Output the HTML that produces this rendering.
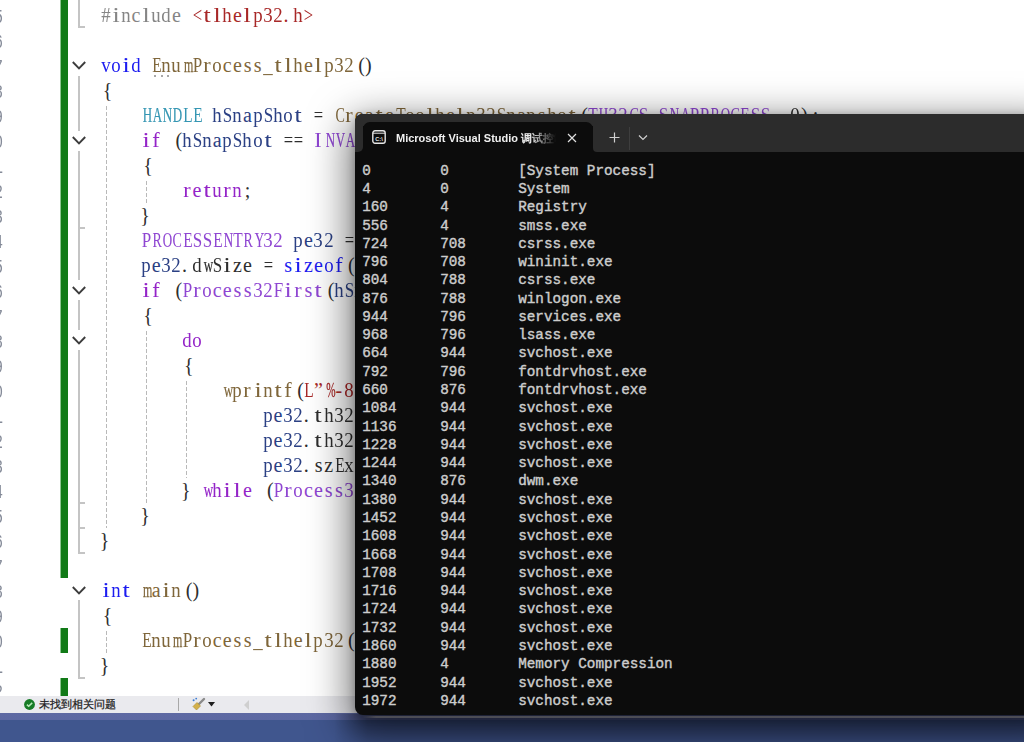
<!DOCTYPE html>
<html><head><meta charset="utf-8">
<style>
*{margin:0;padding:0;box-sizing:border-box}
html,body{width:1024px;height:742px;overflow:hidden;background:#fff;position:relative}
.ed{position:absolute;left:0;top:0;width:1024px;height:696px;background:#fff;overflow:hidden}
.ln{position:absolute;left:-37px;width:41px;text-align:right;height:25px;white-space:pre;font:15px/25px "Liberation Mono",monospace;letter-spacing:1px;color:#858b99;transform:scaleY(1.355);transform-origin:0 0}
.cl{position:absolute;left:100.5px;height:25px;white-space:pre;font:20px/25px "Liberation Serif",serif;color:#1e1e1e}
.cl b{display:inline-block;width:10.15px;text-align:center;font-weight:normal}
.cl b.s94{transform:scaleX(0.94)}.cl b.s130{transform:scaleX(1.3)}.cl b.s83{transform:scaleX(0.83)}.cl b.s77{transform:scaleX(0.77)}.cl b.s60{transform:scaleX(0.6);-webkit-text-stroke:0.25px currentColor}.cl b.s85{transform:scaleX(0.85)}.cl b.s111{transform:scaleX(1.11)}.cl b.s65{transform:scaleX(0.65);-webkit-text-stroke:0.2px currentColor}.cl b.s70{transform:scaleX(0.7)}.cl b.s56{transform:scaleX(0.56);-webkit-text-stroke:0.29px currentColor}
.gb{position:absolute;left:61px;width:7px;background:#117a17;box-shadow:-1px 0 0 #8cc48f}
.vl{position:absolute;left:78px;width:2px;background:#c4c4c4}
.tk{position:absolute;left:78px;width:7px;height:2px;background:#c4c4c4}
.chev{position:absolute;left:72px;width:14px;height:10px}
.ig{position:absolute;width:1px;background:repeating-linear-gradient(to bottom,#b9b9b9 0 4px,transparent 4px 6px)}
.k{color:#1c1cf0}.c{color:#9424c8}.f{color:#7f663a}.t{color:#3596b3}.v{color:#2b4084}.m{color:#8f46d2}.s{color:#a82828}.p{color:#858585}.b{color:#2e2e2e}
.status{position:absolute;left:0;top:696px;width:1024px;height:17px;background:#eaeaee}
.blue{position:absolute;left:0;top:713px;width:1024px;height:30px;background:linear-gradient(to bottom,#5e69a3 0,#5c68a2 6.5px,#40568e 7.5px,#40568e 100%)}
.con{position:absolute;left:354.5px;top:114px;width:700px;height:601px;background:#0c0c0c;border-radius:8px;box-shadow:0 12px 40px 6px rgba(0,0,0,0.55),0 2px 8px 0 rgba(0,0,0,0.25);overflow:hidden}
.tbar{position:absolute;left:0;top:0;width:100%;height:12px;background:#2c2c2c}
.tab{position:absolute;left:8px;top:7.5px;width:230px;height:31px;background:#0c0c0c;border-radius:7px 7px 0 0}
.ttl{position:absolute;left:41.5px;top:17px;font:bold 11px/14px "Liberation Sans",sans-serif;color:#f0f0f0;white-space:nowrap;width:160px;overflow:hidden;-webkit-mask-image:linear-gradient(to right,#000 134px,transparent 160px);mask-image:linear-gradient(to right,#000 134px,transparent 160px)}
.cline{position:absolute;font:14.3px/18.28px "Liberation Mono",monospace;color:#cccccc;white-space:pre;-webkit-text-stroke:0.4px #cccccc}
</style></head><body>
<div class="ed" id="ed">
<div class="ln" style="top:1px">5</div>
<div class="ln" style="top:26px">6</div>
<div class="ln" style="top:51px">7</div>
<div class="ln" style="top:76px">8</div>
<div class="ln" style="top:101px">9</div>
<div class="ln" style="top:126px">10</div>
<div class="ln" style="top:151px">11</div>
<div class="ln" style="top:176px">12</div>
<div class="ln" style="top:201px">13</div>
<div class="ln" style="top:226px">14</div>
<div class="ln" style="top:251px">15</div>
<div class="ln" style="top:276px">16</div>
<div class="ln" style="top:301px">17</div>
<div class="ln" style="top:326px">18</div>
<div class="ln" style="top:351px">19</div>
<div class="ln" style="top:376px">20</div>
<div class="ln" style="top:401px">21</div>
<div class="ln" style="top:426px">22</div>
<div class="ln" style="top:451px">23</div>
<div class="ln" style="top:476px">24</div>
<div class="ln" style="top:501px">25</div>
<div class="ln" style="top:526px">26</div>
<div class="ln" style="top:551px">27</div>
<div class="ln" style="top:576px">28</div>
<div class="ln" style="top:601px">29</div>
<div class="ln" style="top:626px">30</div>
<div class="ln" style="top:651px">31</div>
<div class="ln" style="top:676px">32</div>
<div class="gb" style="top:0;height:578px"></div>
<div class="gb" style="top:628px;height:25px"></div>
<div class="gb" style="top:678px;height:18px"></div>
<div class="vl" style="top:0px;height:27px"></div>
<div class="tk" style="top:26px"></div>
<div class="vl" style="top:76px;height:55px"></div>
<div class="vl" style="top:151px;height:129px"></div>
<div class="tk" style="top:227px"></div>
<div class="vl" style="top:300px;height:30px"></div>
<div class="vl" style="top:350px;height:203px"></div>
<div class="tk" style="top:502px"></div>
<div class="tk" style="top:527px"></div>
<div class="tk" style="top:552px"></div>
<div class="vl" style="top:600px;height:78px"></div>
<div class="tk" style="top:677px"></div>
<svg class="chev" style="top:60px" viewBox="0 0 14 10"><path d="M0.8 2 L7 8.3 L13.2 2" fill="none" stroke="#3c3c3c" stroke-width="1.9"/></svg>
<svg class="chev" style="top:135px" viewBox="0 0 14 10"><path d="M0.8 2 L7 8.3 L13.2 2" fill="none" stroke="#3c3c3c" stroke-width="1.9"/></svg>
<svg class="chev" style="top:285px" viewBox="0 0 14 10"><path d="M0.8 2 L7 8.3 L13.2 2" fill="none" stroke="#3c3c3c" stroke-width="1.9"/></svg>
<svg class="chev" style="top:335px" viewBox="0 0 14 10"><path d="M0.8 2 L7 8.3 L13.2 2" fill="none" stroke="#3c3c3c" stroke-width="1.9"/></svg>
<svg class="chev" style="top:585px" viewBox="0 0 14 10"><path d="M0.8 2 L7 8.3 L13.2 2" fill="none" stroke="#3c3c3c" stroke-width="1.9"/></svg>
<div class="ig" style="left:106px;top:106px;height:422px"></div>
<div class="ig" style="left:146px;top:181px;height:22px"></div>
<div class="ig" style="left:146px;top:331px;height:172px"></div>
<div class="ig" style="left:186px;top:381px;height:97px"></div>
<div class="ig" style="left:106px;top:631px;height:22px"></div>
<div style="position:absolute;left:154px;top:74.5px;width:2.2px;height:2.2px;border-radius:50%;background:#8a8a8a"></div>
<div style="position:absolute;left:160.5px;top:74.5px;width:2.2px;height:2.2px;border-radius:50%;background:#8a8a8a"></div>
<div style="position:absolute;left:166.5px;top:74.5px;width:2.2px;height:2.2px;border-radius:50%;background:#8a8a8a"></div>
<div class="cl" style="top:3.0px"><span class="p"><b class="s94">#</b><b class="s130">i</b><b class="s94">n</b><b>c</b><b class="s130">l</b><b class="s94">u</b><b class="s94">d</b><b>e</b><b> </b></span><span class="s"><b class="s83">&lt;</b><b class="s130">t</b><b class="s130">l</b><b class="s94">h</b><b>e</b><b class="s130">l</b><b class="s94">p</b><b class="s94">3</b><b class="s94">2</b><b style="position:relative;left:-2.2px">.</b><b class="s94">h</b><b class="s83">&gt;</b></span></div>
<div class="cl" style="top:53.0px"><span class="k"><b class="s94">v</b><b class="s94">o</b><b class="s130">i</b><b class="s94">d</b><b> </b></span><span class="f"><b class="s77">E</b><b class="s94">n</b><b class="s94">u</b><b class="s60">m</b><b class="s85">P</b><b class="s111">r</b><b class="s94">o</b><b>c</b><b>e</b><b>s</b><b>s</b><b class="s94">_</b><b class="s130">t</b><b class="s130">l</b><b class="s94">h</b><b>e</b><b class="s130">l</b><b class="s94">p</b><b class="s94">3</b><b class="s94">2</b></span><span class="b"><b style="position:relative;left:2.4px">(</b><b style="position:relative;left:-1px">)</b></span></div>
<div class="cl" style="top:78.0px"><span class="b"><b style="position:relative;left:2px">{</b></span></div>
<div class="cl" style="top:103.0px"><span class="b"><b> </b><b> </b><b> </b><b> </b></span><span class="t"><b class="s65">H</b><b class="s65">A</b><b class="s65">N</b><b class="s65">D</b><b class="s77">L</b><b class="s77">E</b><b> </b></span><span class="v"><b class="s94">h</b><b class="s85">S</b><b class="s94">n</b><b>a</b><b class="s94">p</b><b class="s85">S</b><b class="s94">h</b><b class="s94">o</b><b class="s130">t</b></span><span class="b"><b> </b><b class="s83">=</b><b> </b></span><span class="f"><b class="s70">C</b><b class="s111">r</b><b>e</b><b>a</b><b class="s130">t</b><b>e</b><b class="s77">T</b><b class="s94">o</b><b class="s94">o</b><b class="s130">l</b><b class="s94">h</b><b>e</b><b class="s130">l</b><b class="s94">p</b><b class="s94">3</b><b class="s94">2</b><b class="s85">S</b><b class="s94">n</b><b>a</b><b class="s94">p</b><b>s</b><b class="s94">h</b><b class="s94">o</b><b class="s130">t</b></span><span class="b"><b style="position:relative;left:2.4px">(</b></span><span class="m"><b class="s77">T</b><b class="s65">H</b><b class="s94">3</b><b class="s94">2</b><b class="s70">C</b><b class="s85">S</b><b class="s94">_</b><b class="s85">S</b><b class="s65">N</b><b class="s65">A</b><b class="s85">P</b><b class="s85">P</b><b class="s70">R</b><b class="s65">O</b><b class="s70">C</b><b class="s77">E</b><b class="s85">S</b><b class="s85">S</b></span><span class="b"><b>,</b><b> </b><b class="s94">0</b><b style="position:relative;left:-1px">)</b><b>;</b></span></div>
<div class="cl" style="top:128.0px"><span class="b"><b> </b><b> </b><b> </b><b> </b></span><span class="c"><b class="s130">i</b><b class="s111">f</b><b> </b></span><span class="b"><b style="position:relative;left:2.4px">(</b></span><span class="v"><b class="s94">h</b><b class="s85">S</b><b class="s94">n</b><b>a</b><b class="s94">p</b><b class="s85">S</b><b class="s94">h</b><b class="s94">o</b><b class="s130">t</b></span><span class="b"><b> </b><b class="s83">=</b><b class="s83">=</b><b> </b></span><span class="m"><b class="s111">I</b><b class="s65">N</b><b class="s65">V</b><b class="s65">A</b><b class="s77">L</b><b class="s111">I</b><b class="s65">D</b><b class="s94">_</b><b class="s65">H</b><b class="s65">A</b><b class="s65">N</b><b class="s65">D</b><b class="s77">L</b><b class="s77">E</b><b class="s94">_</b><b class="s65">V</b><b class="s65">A</b><b class="s77">L</b><b class="s65">U</b><b class="s77">E</b></span><span class="b"><b style="position:relative;left:-1px">)</b></span></div>
<div class="cl" style="top:153.0px"><span class="b"><b> </b><b> </b><b> </b><b> </b><b style="position:relative;left:2px">{</b></span></div>
<div class="cl" style="top:178.0px"><span class="b"><b> </b><b> </b><b> </b><b> </b><b> </b><b> </b><b> </b><b> </b></span><span class="c"><b class="s111">r</b><b>e</b><b class="s130">t</b><b class="s94">u</b><b class="s111">r</b><b class="s94">n</b></span><span class="b"><b>;</b></span></div>
<div class="cl" style="top:203.0px"><span class="b"><b> </b><b> </b><b> </b><b> </b><b style="position:relative;left:-1px">}</b></span></div>
<div class="cl" style="top:228.0px"><span class="b"><b> </b><b> </b><b> </b><b> </b></span><span class="m"><b class="s85">P</b><b class="s70">R</b><b class="s65">O</b><b class="s70">C</b><b class="s77">E</b><b class="s85">S</b><b class="s85">S</b><b class="s77">E</b><b class="s65">N</b><b class="s77">T</b><b class="s70">R</b><b class="s65">Y</b><b class="s94">3</b><b class="s94">2</b><b> </b></span><span class="v"><b class="s94">p</b><b>e</b><b class="s94">3</b><b class="s94">2</b></span><span class="b"><b> </b><b class="s83">=</b><b> </b><b style="position:relative;left:2px">{</b><b> </b><b class="s94">0</b><b> </b><b style="position:relative;left:-1px">}</b><b>;</b></span></div>
<div class="cl" style="top:253.0px"><span class="b"><b> </b><b> </b><b> </b><b> </b></span><span class="v"><b class="s94">p</b><b>e</b><b class="s94">3</b><b class="s94">2</b></span><span class="b"><b style="position:relative;left:-2.2px">.</b><b class="s94">d</b><b class="s65">w</b><b class="s85">S</b><b class="s130">i</b><b>z</b><b>e</b><b> </b><b class="s83">=</b><b> </b></span><span class="k"><b>s</b><b class="s130">i</b><b>z</b><b>e</b><b class="s94">o</b><b class="s111">f</b></span><span class="b"><b style="position:relative;left:2.4px">(</b></span><span class="m"><b class="s85">P</b><b class="s70">R</b><b class="s65">O</b><b class="s70">C</b><b class="s77">E</b><b class="s85">S</b><b class="s85">S</b><b class="s77">E</b><b class="s65">N</b><b class="s77">T</b><b class="s70">R</b><b class="s65">Y</b><b class="s94">3</b><b class="s94">2</b></span><span class="b"><b style="position:relative;left:-1px">)</b><b>;</b></span></div>
<div class="cl" style="top:278.0px"><span class="b"><b> </b><b> </b><b> </b><b> </b></span><span class="c"><b class="s130">i</b><b class="s111">f</b><b> </b></span><span class="b"><b style="position:relative;left:2.4px">(</b></span><span class="m"><b class="s85">P</b><b class="s111">r</b><b class="s94">o</b><b>c</b><b>e</b><b>s</b><b>s</b><b class="s94">3</b><b class="s94">2</b><b class="s85">F</b><b class="s130">i</b><b class="s111">r</b><b>s</b><b class="s130">t</b></span><span class="b"><b style="position:relative;left:2.4px">(</b></span><span class="v"><b class="s94">h</b><b class="s85">S</b><b class="s94">n</b><b>a</b><b class="s94">p</b><b class="s85">S</b><b class="s94">h</b><b class="s94">o</b><b class="s130">t</b></span><span class="b"><b>,</b><b> </b><b class="s60">&amp;</b></span><span class="v"><b class="s94">p</b><b>e</b><b class="s94">3</b><b class="s94">2</b></span><span class="b"><b style="position:relative;left:-1px">)</b><b style="position:relative;left:-1px">)</b></span></div>
<div class="cl" style="top:303.0px"><span class="b"><b> </b><b> </b><b> </b><b> </b><b style="position:relative;left:2px">{</b></span></div>
<div class="cl" style="top:328.0px"><span class="b"><b> </b><b> </b><b> </b><b> </b><b> </b><b> </b><b> </b><b> </b></span><span class="c"><b class="s94">d</b><b class="s94">o</b></span></div>
<div class="cl" style="top:353.0px"><span class="b"><b> </b><b> </b><b> </b><b> </b><b> </b><b> </b><b> </b><b> </b><b style="position:relative;left:2px">{</b></span></div>
<div class="cl" style="top:378.0px"><span class="b"><b> </b><b> </b><b> </b><b> </b><b> </b><b> </b><b> </b><b> </b><b> </b><b> </b><b> </b><b> </b></span><span class="f"><b class="s65">w</b><b class="s94">p</b><b class="s111">r</b><b class="s130">i</b><b class="s94">n</b><b class="s130">t</b><b class="s111">f</b></span><span class="b"><b style="position:relative;left:2.4px">(</b></span><span class="s"><b class="s77">L</b><b>”</b><b class="s56">%</b><b>-</b><b class="s94">8</b><b class="s94">d</b><b> </b><b class="s56">%</b><b>-</b><b class="s94">8</b><b class="s94">d</b><b> </b><b class="s56">%</b><b>s</b><b>\</b><b class="s94">n</b><b>”</b></span><span class="b"><b>,</b></span></div>
<div class="cl" style="top:403.0px"><span class="b"><b> </b><b> </b><b> </b><b> </b><b> </b><b> </b><b> </b><b> </b><b> </b><b> </b><b> </b><b> </b><b> </b><b> </b><b> </b><b> </b></span><span class="v"><b class="s94">p</b><b>e</b><b class="s94">3</b><b class="s94">2</b></span><span class="b"><b style="position:relative;left:-2.2px">.</b><b class="s130">t</b><b class="s94">h</b><b class="s94">3</b><b class="s94">2</b><b class="s85">P</b><b class="s111">r</b><b class="s94">o</b><b>c</b><b>e</b><b>s</b><b>s</b><b class="s111">I</b><b class="s65">D</b><b>,</b></span></div>
<div class="cl" style="top:428.0px"><span class="b"><b> </b><b> </b><b> </b><b> </b><b> </b><b> </b><b> </b><b> </b><b> </b><b> </b><b> </b><b> </b><b> </b><b> </b><b> </b><b> </b></span><span class="v"><b class="s94">p</b><b>e</b><b class="s94">3</b><b class="s94">2</b></span><span class="b"><b style="position:relative;left:-2.2px">.</b><b class="s130">t</b><b class="s94">h</b><b class="s94">3</b><b class="s94">2</b><b class="s85">P</b><b>a</b><b class="s111">r</b><b>e</b><b class="s94">n</b><b class="s130">t</b><b class="s85">P</b><b class="s111">r</b><b class="s94">o</b><b>c</b><b>e</b><b>s</b><b>s</b><b class="s111">I</b><b class="s65">D</b><b>,</b></span></div>
<div class="cl" style="top:453.0px"><span class="b"><b> </b><b> </b><b> </b><b> </b><b> </b><b> </b><b> </b><b> </b><b> </b><b> </b><b> </b><b> </b><b> </b><b> </b><b> </b><b> </b></span><span class="v"><b class="s94">p</b><b>e</b><b class="s94">3</b><b class="s94">2</b></span><span class="b"><b style="position:relative;left:-2.2px">.</b><b>s</b><b>z</b><b class="s77">E</b><b class="s94">x</b><b>e</b><b class="s85">F</b><b class="s130">i</b><b class="s130">l</b><b>e</b><b style="position:relative;left:-1px">)</b><b>;</b></span></div>
<div class="cl" style="top:478.0px"><span class="b"><b> </b><b> </b><b> </b><b> </b><b> </b><b> </b><b> </b><b> </b><b style="position:relative;left:-1px">}</b><b> </b></span><span class="c"><b class="s65">w</b><b class="s94">h</b><b class="s130">i</b><b class="s130">l</b><b>e</b><b> </b></span><span class="b"><b style="position:relative;left:2.4px">(</b></span><span class="m"><b class="s85">P</b><b class="s111">r</b><b class="s94">o</b><b>c</b><b>e</b><b>s</b><b>s</b><b class="s94">3</b><b class="s94">2</b><b class="s65">N</b><b>e</b><b class="s94">x</b><b class="s130">t</b></span><span class="b"><b style="position:relative;left:2.4px">(</b></span><span class="v"><b class="s94">h</b><b class="s85">S</b><b class="s94">n</b><b>a</b><b class="s94">p</b><b class="s85">S</b><b class="s94">h</b><b class="s94">o</b><b class="s130">t</b></span><span class="b"><b>,</b><b> </b><b class="s60">&amp;</b></span><span class="v"><b class="s94">p</b><b>e</b><b class="s94">3</b><b class="s94">2</b></span><span class="b"><b style="position:relative;left:-1px">)</b><b style="position:relative;left:-1px">)</b><b>;</b></span></div>
<div class="cl" style="top:503.0px"><span class="b"><b> </b><b> </b><b> </b><b> </b><b style="position:relative;left:-1px">}</b></span></div>
<div class="cl" style="top:528.0px"><span class="b"><b style="position:relative;left:-1px">}</b></span></div>
<div class="cl" style="top:578.0px"><span class="k"><b class="s130">i</b><b class="s94">n</b><b class="s130">t</b><b> </b></span><span class="f"><b class="s60">m</b><b>a</b><b class="s130">i</b><b class="s94">n</b></span><span class="b"><b style="position:relative;left:2.4px">(</b><b style="position:relative;left:-1px">)</b></span></div>
<div class="cl" style="top:603.0px"><span class="b"><b style="position:relative;left:2px">{</b></span></div>
<div class="cl" style="top:628.0px"><span class="b"><b> </b><b> </b><b> </b><b> </b></span><span class="f"><b class="s77">E</b><b class="s94">n</b><b class="s94">u</b><b class="s60">m</b><b class="s85">P</b><b class="s111">r</b><b class="s94">o</b><b>c</b><b>e</b><b>s</b><b>s</b><b class="s94">_</b><b class="s130">t</b><b class="s130">l</b><b class="s94">h</b><b>e</b><b class="s130">l</b><b class="s94">p</b><b class="s94">3</b><b class="s94">2</b></span><span class="b"><b style="position:relative;left:2.4px">(</b><b style="position:relative;left:-1px">)</b><b>;</b></span></div>
<div class="cl" style="top:653.0px"><span class="b"><b style="position:relative;left:-1px">}</b></span></div>
</div>
<div class="status">
  <svg style="position:absolute;left:24px;top:3px" width="11" height="11" viewBox="0 0 11 11"><circle cx="5.5" cy="5.5" r="5.4" fill="#177c26"/><path d="M2.9 5.6L4.7 7.3L8.2 3.9" fill="none" stroke="#b9eab9" stroke-width="1.5"/></svg>
  <div style="position:absolute;left:39px;top:0px;font:10.6px/16px 'Liberation Sans',sans-serif;color:#1e1e1e;white-space:nowrap;-webkit-text-stroke:0.25px #1e1e1e">未找到相关问题</div>
  <div style="position:absolute;left:178px;top:2px;width:1px;height:13px;background:#a8a8a8"></div>
  <svg style="position:absolute;left:191px;top:1px" width="15" height="14" viewBox="0 0 15 14"><path d="M7.5 7.5L13 2" stroke="#8a8a8a" stroke-width="2.4" stroke-linecap="round"/><path d="M2 9.5L6 5.5L9.5 9L5.5 13Z" fill="#d3b04a" stroke="#a88a30" stroke-width="0.6"/><circle cx="2.6" cy="3.2" r="1" fill="#3a7bd5"/><circle cx="5.2" cy="1.6" r="0.9" fill="#3a7bd5"/></svg>
  <svg style="position:absolute;left:208px;top:6px" width="7" height="5" viewBox="0 0 7 5"><path d="M0 0H7L3.5 4.5Z" fill="#1e1e1e"/></svg>
  <svg style="position:absolute;left:244px;top:4px" width="5" height="10" viewBox="0 0 5 10"><path d="M5 0V10L0 5Z" fill="#cfcfcf"/></svg>
</div>
<div class="blue"></div>
<div style="position:absolute;left:335px;top:714px;width:689px;height:28px;background:linear-gradient(to bottom,rgba(0,0,8,0.3) 0,rgba(0,0,8,0.3) 7px,rgba(0,0,8,0.3) 8px,rgba(0,0,8,0.12) 100%);-webkit-mask-image:linear-gradient(to right,transparent 0,#000 32px);mask-image:linear-gradient(to right,transparent 0,#000 32px)"></div>
<div style="position:absolute;left:362px;top:715.5px;width:662px;height:2.5px;background:linear-gradient(to right,rgba(76,76,85,0) 0,#4c4c55 14px);z-index:5"></div>
<div class="con" id="con">
  <div class="tbar"></div>
  <div style="position:absolute;left:0;top:0;width:8px;height:37.5px;background:#2c2c2c;border-bottom-right-radius:5px"></div>
  <div style="position:absolute;left:238px;top:0;width:500px;height:37.5px;background:#2c2c2c;border-bottom-left-radius:4px"></div>
  <div class="tab"></div>
  <svg style="position:absolute;left:17.5px;top:16.2px" width="14" height="14" viewBox="0 0 14 14"><rect x="0.8" y="0.8" width="12.4" height="12.4" rx="2.2" fill="none" stroke="#e6e6e6" stroke-width="1.4"/><line x1="1" y1="3.2" x2="13" y2="3.2" stroke="#e6e6e6" stroke-width="1"/><text x="7" y="10.6" text-anchor="middle" font-family="Liberation Sans" font-weight="bold" font-size="5.5" fill="#e6e6e6">C:\</text></svg>
  <div class="ttl">Microsoft Visual Studio 调试控制台</div>
  <svg style="position:absolute;left:212.5px;top:18.8px" width="10" height="10" viewBox="0 0 10 10"><path d="M1 1L9 9M9 1L1 9" stroke="#e0e0e0" stroke-width="1.2"/></svg>
  <svg style="position:absolute;left:254px;top:17.5px" width="11" height="11" viewBox="0 0 11 11"><path d="M5.5 0.5V10.5M0.5 5.5H10.5" stroke="#d0d0d0" stroke-width="1.2"/></svg>
  <div style="position:absolute;left:274px;top:12.5px;width:1px;height:23px;background:#3e3e3e"></div>
  <svg style="position:absolute;left:283px;top:20px" width="10" height="7" viewBox="0 0 10 7"><path d="M1 1.5L5 5.5L9 1.5" fill="none" stroke="#d0d0d0" stroke-width="1.2"/></svg>
<div class="cline" style="left:7.7px;top:47.66px">0</div>
<div class="cline" style="left:85.7px;top:47.66px">0</div>
<div class="cline" style="left:163.7px;top:47.66px">[System Process]</div>
<div class="cline" style="left:7.7px;top:65.94px">4</div>
<div class="cline" style="left:85.7px;top:65.94px">0</div>
<div class="cline" style="left:163.7px;top:65.94px">System</div>
<div class="cline" style="left:7.7px;top:84.22px">160</div>
<div class="cline" style="left:85.7px;top:84.22px">4</div>
<div class="cline" style="left:163.7px;top:84.22px">Registry</div>
<div class="cline" style="left:7.7px;top:102.50px">556</div>
<div class="cline" style="left:85.7px;top:102.50px">4</div>
<div class="cline" style="left:163.7px;top:102.50px">smss.exe</div>
<div class="cline" style="left:7.7px;top:120.78px">724</div>
<div class="cline" style="left:85.7px;top:120.78px">708</div>
<div class="cline" style="left:163.7px;top:120.78px">csrss.exe</div>
<div class="cline" style="left:7.7px;top:139.06px">796</div>
<div class="cline" style="left:85.7px;top:139.06px">708</div>
<div class="cline" style="left:163.7px;top:139.06px">wininit.exe</div>
<div class="cline" style="left:7.7px;top:157.34px">804</div>
<div class="cline" style="left:85.7px;top:157.34px">788</div>
<div class="cline" style="left:163.7px;top:157.34px">csrss.exe</div>
<div class="cline" style="left:7.7px;top:175.62px">876</div>
<div class="cline" style="left:85.7px;top:175.62px">788</div>
<div class="cline" style="left:163.7px;top:175.62px">winlogon.exe</div>
<div class="cline" style="left:7.7px;top:193.90px">944</div>
<div class="cline" style="left:85.7px;top:193.90px">796</div>
<div class="cline" style="left:163.7px;top:193.90px">services.exe</div>
<div class="cline" style="left:7.7px;top:212.18px">968</div>
<div class="cline" style="left:85.7px;top:212.18px">796</div>
<div class="cline" style="left:163.7px;top:212.18px">lsass.exe</div>
<div class="cline" style="left:7.7px;top:230.46px">664</div>
<div class="cline" style="left:85.7px;top:230.46px">944</div>
<div class="cline" style="left:163.7px;top:230.46px">svchost.exe</div>
<div class="cline" style="left:7.7px;top:248.74px">792</div>
<div class="cline" style="left:85.7px;top:248.74px">796</div>
<div class="cline" style="left:163.7px;top:248.74px">fontdrvhost.exe</div>
<div class="cline" style="left:7.7px;top:267.02px">660</div>
<div class="cline" style="left:85.7px;top:267.02px">876</div>
<div class="cline" style="left:163.7px;top:267.02px">fontdrvhost.exe</div>
<div class="cline" style="left:7.7px;top:285.30px">1084</div>
<div class="cline" style="left:85.7px;top:285.30px">944</div>
<div class="cline" style="left:163.7px;top:285.30px">svchost.exe</div>
<div class="cline" style="left:7.7px;top:303.58px">1136</div>
<div class="cline" style="left:85.7px;top:303.58px">944</div>
<div class="cline" style="left:163.7px;top:303.58px">svchost.exe</div>
<div class="cline" style="left:7.7px;top:321.86px">1228</div>
<div class="cline" style="left:85.7px;top:321.86px">944</div>
<div class="cline" style="left:163.7px;top:321.86px">svchost.exe</div>
<div class="cline" style="left:7.7px;top:340.14px">1244</div>
<div class="cline" style="left:85.7px;top:340.14px">944</div>
<div class="cline" style="left:163.7px;top:340.14px">svchost.exe</div>
<div class="cline" style="left:7.7px;top:358.42px">1340</div>
<div class="cline" style="left:85.7px;top:358.42px">876</div>
<div class="cline" style="left:163.7px;top:358.42px">dwm.exe</div>
<div class="cline" style="left:7.7px;top:376.70px">1380</div>
<div class="cline" style="left:85.7px;top:376.70px">944</div>
<div class="cline" style="left:163.7px;top:376.70px">svchost.exe</div>
<div class="cline" style="left:7.7px;top:394.98px">1452</div>
<div class="cline" style="left:85.7px;top:394.98px">944</div>
<div class="cline" style="left:163.7px;top:394.98px">svchost.exe</div>
<div class="cline" style="left:7.7px;top:413.26px">1608</div>
<div class="cline" style="left:85.7px;top:413.26px">944</div>
<div class="cline" style="left:163.7px;top:413.26px">svchost.exe</div>
<div class="cline" style="left:7.7px;top:431.54px">1668</div>
<div class="cline" style="left:85.7px;top:431.54px">944</div>
<div class="cline" style="left:163.7px;top:431.54px">svchost.exe</div>
<div class="cline" style="left:7.7px;top:449.82px">1708</div>
<div class="cline" style="left:85.7px;top:449.82px">944</div>
<div class="cline" style="left:163.7px;top:449.82px">svchost.exe</div>
<div class="cline" style="left:7.7px;top:468.10px">1716</div>
<div class="cline" style="left:85.7px;top:468.10px">944</div>
<div class="cline" style="left:163.7px;top:468.10px">svchost.exe</div>
<div class="cline" style="left:7.7px;top:486.38px">1724</div>
<div class="cline" style="left:85.7px;top:486.38px">944</div>
<div class="cline" style="left:163.7px;top:486.38px">svchost.exe</div>
<div class="cline" style="left:7.7px;top:504.66px">1732</div>
<div class="cline" style="left:85.7px;top:504.66px">944</div>
<div class="cline" style="left:163.7px;top:504.66px">svchost.exe</div>
<div class="cline" style="left:7.7px;top:522.94px">1860</div>
<div class="cline" style="left:85.7px;top:522.94px">944</div>
<div class="cline" style="left:163.7px;top:522.94px">svchost.exe</div>
<div class="cline" style="left:7.7px;top:541.22px">1880</div>
<div class="cline" style="left:85.7px;top:541.22px">4</div>
<div class="cline" style="left:163.7px;top:541.22px">Memory Compression</div>
<div class="cline" style="left:7.7px;top:559.50px">1952</div>
<div class="cline" style="left:85.7px;top:559.50px">944</div>
<div class="cline" style="left:163.7px;top:559.50px">svchost.exe</div>
<div class="cline" style="left:7.7px;top:577.78px">1972</div>
<div class="cline" style="left:85.7px;top:577.78px">944</div>
<div class="cline" style="left:163.7px;top:577.78px">svchost.exe</div>
</div>
</body></html>
